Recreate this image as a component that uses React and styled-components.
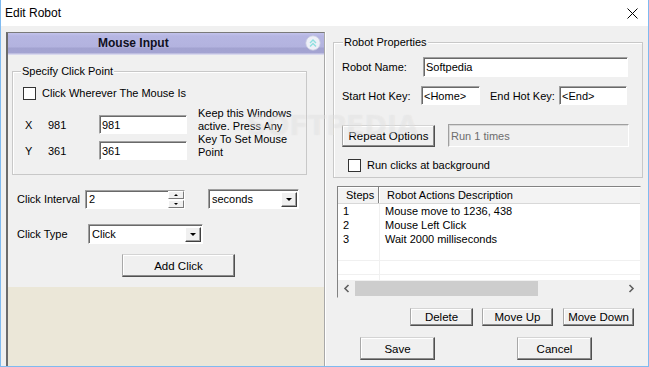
import React from "react";
import styled, { createGlobalStyle } from "styled-components";

const GlobalStyle = createGlobalStyle`
  html, body { margin: 0; padding: 0; background: #ffffff; }
  body { font-family: "Liberation Sans", Arial, sans-serif; font-size: 11px; color: #000; }
  * { box-sizing: border-box; }
`;

const Window = styled.div`
  position: relative;
  width: 649px;
  height: 367px;
  display: flex;
  flex-direction: column;
  border: 1px solid #7fbaf0;
  border-top: none;
  background: #f0f0f0;
  overflow: hidden;
`;

const TitleBar = styled.div`
  height: 26px;
  flex: none;
  background: #ffffff;
  display: flex;
  align-items: center;
  justify-content: space-between;
  padding: 0 10px 0 4px;
  font-size: 12px;
`;

const Body = styled.div`
  flex: 1;
  display: flex;
  min-height: 0;
`;

const MousePanel = styled.div`
  width: 319px;
  margin: 6px 0 0 5px;
  display: flex;
  flex-direction: column;
  border-left: 2px solid #6b6b6b;
  border-top: 1px solid #7a7a7a;
  border-right: 1px solid #a8a8a8;
  box-shadow: 1px 0 0 #ffffff;
`;

const PanelHeader = styled.div`
  height: 22px;
  flex: none;
  display: flex;
  align-items: center;
  padding: 0 3px 2px 90px;
  background: linear-gradient(#c3c3ec 0px, #b6b6e2 3px, #b3b3df 14px, #a2a2d0 15px, #a4a4d2 20px, #d8d8ee 21px);
  font-size: 12px;
  font-weight: bold;
  color: #101020;
`;

const HeaderTitle = styled.span`
  margin-right: auto;
`;

const PanelContent = styled.div`
  height: 232px;
  flex: none;
  padding: 0 0 0 4px;
`;

const PanelFiller = styled.div`
  flex: 1;
  background: #ebe7d8;
`;

const Group = styled.div`
  width: ${(p) => p.$w}px;
  height: ${(p) => p.$h}px;
  margin-top: ${(p) => p.$top}px;
  border: 1px solid #c8c8c8;
  box-shadow: inset 1px 1px 0 #ffffff;
  padding: 0 0 0 ${(p) => p.$pad || 0}px;
`;

const Caption = styled.div`
  width: fit-content;
  margin: -7px 0 0 ${(p) => p.$left}px;
  padding: 0 1px;
  line-height: 13px;
  background: #f0f0f0;
`;

const CheckRow = styled.label`
  display: flex;
  align-items: center;
  gap: 6px;
  height: 14px;
  margin: ${(p) => p.$m};
`;

const CheckBox = styled.span`
  width: 13px;
  height: 13px;
  flex: none;
  background: #ffffff;
  border: 1px solid #333333;
`;

const PointArea = styled.div`
  display: flex;
  margin-top: 7px;
`;

const CoordColumn = styled.div`
  padding: 8px 0 0 12px;
  display: flex;
  flex-direction: column;
  gap: 7px;
`;

const CoordRow = styled.div`
  display: flex;
  align-items: center;
  height: 19px;
`;

const Axis = styled.span`
  width: 23px;
`;

const CoordValue = styled.span`
  width: 51px;
`;

const HintText = styled.div`
  margin-left: 11px;
  line-height: 13px;
  white-space: nowrap;
`;

const Field = styled.div`
  width: ${(p) => p.$w}px;
  height: ${(p) => p.$h || 19}px;
  display: flex;
  align-items: center;
  padding-left: 2px;
  flex: none;
  background: ${(p) => (p.$disabled ? "#f0f0f0" : "#ffffff")};
  color: ${(p) => (p.$disabled ? "#6d6d6d" : "#000")};
  border: 1px solid;
  border-color: #a0a0a0 #ffffff #ffffff #a0a0a0;
  box-shadow: ${(p) => (p.$disabled ? "inset 1px 1px 0 #d8d8d8" : "inset 1px 1px 0 #696969")};
  white-space: nowrap;
`;

const FieldText = styled.span`
  flex: 1;
  padding-left: 1px;
`;

const FormRow = styled.div`
  display: flex;
  align-items: center;
  margin-top: ${(p) => p.$top}px;
  padding-left: ${(p) => p.$left || 0}px;
`;

const Label = styled.span`
  width: ${(p) => (p.$w ? `${p.$w}px` : "auto")};
  padding-left: ${(p) => p.$pad || 0}px;
  flex: none;
  white-space: nowrap;
`;

const DropButton = styled.span`
  width: 16px;
  height: 15px;
  margin-right: 1px;
  display: flex;
  align-items: center;
  justify-content: center;
  background: #f0f0f0;
  border: 1px solid;
  border-color: #ffffff #404040 #404040 #ffffff;
  box-shadow: inset -1px -1px 0 #a0a0a0;
`;

const Triangle = styled.span`
  width: 0;
  height: 0;
  border-left: ${(p) => p.$s}px solid transparent;
  border-right: ${(p) => p.$s}px solid transparent;
  ${(p) => (p.$up ? "border-bottom" : "border-top")}: ${(p) => p.$s}px solid #000;
`;

const Spin = styled.span`
  width: 16px;
  height: 17px;
  display: flex;
  flex-direction: column;
  gap: 1px;
`;

const SpinButton = styled.span`
  flex: 1;
  display: flex;
  align-items: center;
  justify-content: center;
  background: #f0f0f0;
  border: 1px solid;
  border-color: #ffffff #7a7a7a #7a7a7a #ffffff;
`;

const Button = styled.button`
  width: ${(p) => p.$w}px;
  height: ${(p) => p.$h}px;
  margin-left: ${(p) => p.$left || 0}px;
  padding: 0;
  flex: none;
  font-family: inherit;
  font-size: 11.5px;
  color: #000;
  background: #f0f0f0;
  border: 1px solid;
  border-color: #d4d4d4 #505050 #505050 #a8a8a8;
  box-shadow: inset -1px -1px 0 #8c8c8c, inset 1px 1px 0 #ffffff;
  cursor: default;
`;

const RightColumn = styled.div`
  width: 310px;
  margin: 16px 0 0 8px;
  display: flex;
  flex-direction: column;
`;

const ListView = styled.div`
  width: 304px;
  height: 112px;
  margin: 8px 0 0 4px;
  border: 1px solid #828282;
  border-right-color: #f0f0f0;
  border-bottom-color: #f0f0f0;
  background: #ffffff;
  display: flex;
  flex-direction: column;
`;

const ListHeader = styled.div`
  display: flex;
  height: 17px;
  flex: none;
  background: #f3f3f3;
  border-bottom: 1px solid #d8d8d8;
  box-shadow: inset 0 1px 0 #ffffff;
`;

const HeaderCell = styled.div`
  width: ${(p) => (p.$w ? `${p.$w}px` : "auto")};
  flex: ${(p) => (p.$w ? "none" : 1)};
  display: flex;
  align-items: center;
  padding-left: ${(p) => p.$pad}px;
  border-right: ${(p) => (p.$w ? "1px solid #808080" : "none")};
  box-shadow: ${(p) => (p.$w ? "1px 0 0 #ffffff" : "none")};
`;

const Rows = styled.div`
  flex: 1;
  overflow: hidden;
`;

const Row = styled.div`
  display: flex;
  height: ${(p) => p.$h || 14}px;
  border-bottom: ${(p) => (p.$grid ? "1px solid #f0f0f0" : "none")};
  line-height: 14px;
`;

const Cell = styled.div`
  width: ${(p) => (p.$w ? `${p.$w}px` : "auto")};
  flex: ${(p) => (p.$w ? "none" : 1)};
  padding-left: ${(p) => p.$pad}px;
  border-right: ${(p) => (p.$w ? "1px solid #f0f0f0" : "none")};
`;

const ScrollBar = styled.div`
  height: 17px;
  flex: none;
  display: flex;
  align-items: center;
  background: #f0f0f0;
`;

const ScrollArrow = styled.span`
  width: 17px;
  display: flex;
  align-items: center;
  justify-content: center;
`;

const ScrollTrack = styled.div`
  flex: 1;
  height: 15px;
  display: flex;
`;

const ScrollThumb = styled.div`
  width: 183px;
  height: 100%;
  background: #cdcdcd;
`;

const ActionRow = styled.div`
  display: flex;
  justify-content: flex-end;
  padding-right: 9px;
  margin-top: 10px;
`;

const DialogRow = styled.div`
  display: flex;
  margin-top: 11px;
  padding-left: 27px;
`;

const Watermark = styled.div`
  position: absolute;
  left: 246px;
  top: 110px;
  font-family: "DejaVu Sans", sans-serif;
  font-size: 27px;
  font-weight: bold;
  color: rgba(255, 255, 255, 0.3);
  text-shadow: 0 0 1px rgba(160, 160, 160, 0.2);
  pointer-events: none;
`;

const CloseIcon = () => (
  <svg width="11" height="11" viewBox="0 0 11 11">
    <path d="M0.5 0.5 L10.5 10.5 M10.5 0.5 L0.5 10.5" stroke="#000" strokeWidth="1" />
  </svg>
);

const CollapseIcon = () => (
  <svg width="16" height="16" viewBox="0 0 16 16">
    <circle cx="8" cy="8" r="7.2" fill="#eef0f8" stroke="#c9cbe0" strokeWidth="0.8" />
    <path d="M5 8 L8 5 L11 8 M5 11.5 L8 8.5 L11 11.5" fill="none" stroke="#8fe0e0" strokeWidth="1.4" />
  </svg>
);

const Chevron = ({ left }) => (
  <svg width="7" height="9" viewBox="0 0 7 9">
    <path d={left ? "M5.5 1 L2 4.5 L5.5 8" : "M1.5 1 L5 4.5 L1.5 8"} fill="none" stroke="#606060" strokeWidth="1.6" />
  </svg>
);

const Select = ({ w, h, value }) => (
  <Field $w={w} $h={h}>
    <FieldText>{value}</FieldText>
    <DropButton>
      <Triangle $s={3.5} />
    </DropButton>
  </Field>
);

const steps = [
  ["1", "Mouse move to 1236, 438"],
  ["2", "Mouse Left Click"],
  ["3", "Wait 2000 milliseconds"],
];

export default function App() {
  return (
    <>
      <GlobalStyle />
      <Window>
        <TitleBar>
          <span>Edit Robot</span>
          <CloseIcon />
        </TitleBar>
        <Body>
          <MousePanel>
            <PanelHeader>
              <HeaderTitle>Mouse Input</HeaderTitle>
              <CollapseIcon />
            </PanelHeader>
            <PanelContent>
              <Group $w={295} $h={104} $top={16}>
                <Caption $left={8}>Specify Click Point</Caption>
                <CheckRow $m="8px 0 0 10px">
                  <CheckBox />
                  <Label>Click Wherever The Mouse Is</Label>
                </CheckRow>
                <PointArea>
                  <CoordColumn>
                    <CoordRow>
                      <Axis>X</Axis>
                      <CoordValue>981</CoordValue>
                      <Field $w={88}>981</Field>
                    </CoordRow>
                    <CoordRow>
                      <Axis>Y</Axis>
                      <CoordValue>361</CoordValue>
                      <Field $w={88}>361</Field>
                    </CoordRow>
                  </CoordColumn>
                  <HintText>
                    Keep this Windows
                    <br />
                    active. Press Any
                    <br />
                    Key To Set Mouse
                    <br />
                    Point
                  </HintText>
                </PointArea>
              </Group>
              <FormRow $top={14} $left={5}>
                <Label $w={68}>Click Interval</Label>
                <Field $w={100}>
                  <FieldText>2</FieldText>
                  <Spin>
                    <SpinButton>
                      <Triangle $s={2} $up />
                    </SpinButton>
                    <SpinButton>
                      <Triangle $s={2} />
                    </SpinButton>
                  </Spin>
                </Field>
                <Label $w={23} />
                <Select w={91} h={20} value="seconds" />
              </FormRow>
              <FormRow $top={15} $left={5}>
                <Label $w={71}>Click Type</Label>
                <Select w={115} h={20} value="Click" />
              </FormRow>
              <FormRow $top={10} $left={110}>
                <Button $w={113} $h={23}>Add Click</Button>
              </FormRow>
            </PanelContent>
            <PanelFiller />
          </MousePanel>
          <RightColumn>
            <Group $w={310} $h={136} $top={0} $pad={8}>
              <Caption $left={1}>Robot Properties</Caption>
              <FormRow $top={8}>
                <Label $w={81}>Robot Name:</Label>
                <Field $w={205} $h={20}>Softpedia</Field>
              </FormRow>
              <FormRow $top={9}>
                <Label $w={79}>Start Hot Key:</Label>
                <Field $w={59}>&lt;Home&gt;</Field>
                <Label $w={79} $pad={10}>End Hot Key:</Label>
                <Field $w={68}>&lt;End&gt;</Field>
              </FormRow>
              <FormRow $top={19}>
                <Button $w={93} $h={22}>Repeat Options</Button>
                <Label $w={13} />
                <Field $w={181} $h={23} $disabled>Run 1 times</Field>
              </FormRow>
              <CheckRow $m="11px 0 0 6px">
                <CheckBox />
                <Label>Run clicks at background</Label>
              </CheckRow>
            </Group>
            <ListView>
              <ListHeader>
                <HeaderCell $w={41} $pad={8}>Steps</HeaderCell>
                <HeaderCell $pad={8}>Robot Actions Description</HeaderCell>
              </ListHeader>
              <Rows>
                {steps.map(([n, d]) => (
                  <Row key={n}>
                    <Cell $w={42} $pad={5}>{n}</Cell>
                    <Cell $pad={5}>{d}</Cell>
                  </Row>
                ))}
                <Row $h={15} $grid>
                  <Cell $w={42} $pad={5} />
                  <Cell $pad={5} />
                </Row>
                <Row $h={14} $grid>
                  <Cell $w={42} $pad={5} />
                  <Cell $pad={5} />
                </Row>
                <Row $h={14}>
                  <Cell $w={42} $pad={5} />
                  <Cell $pad={5} />
                </Row>
              </Rows>
              <ScrollBar>
                <ScrollArrow>
                  <Chevron left />
                </ScrollArrow>
                <ScrollTrack>
                  <ScrollThumb />
                </ScrollTrack>
                <ScrollArrow>
                  <Chevron />
                </ScrollArrow>
              </ScrollBar>
            </ListView>
            <ActionRow>
              <Button $w={63} $h={18}>Delete</Button>
              <Button $w={71} $h={18} $left={9}>Move Up</Button>
              <Button $w={71} $h={18} $left={10}>Move Down</Button>
            </ActionRow>
            <DialogRow>
              <Button $w={75} $h={23}>Save</Button>
              <Button $w={75} $h={23} $left={82}>Cancel</Button>
            </DialogRow>
          </RightColumn>
        </Body>
        <Watermark>SOFTPEDIA</Watermark>
      </Window>
    </>
  );
}
